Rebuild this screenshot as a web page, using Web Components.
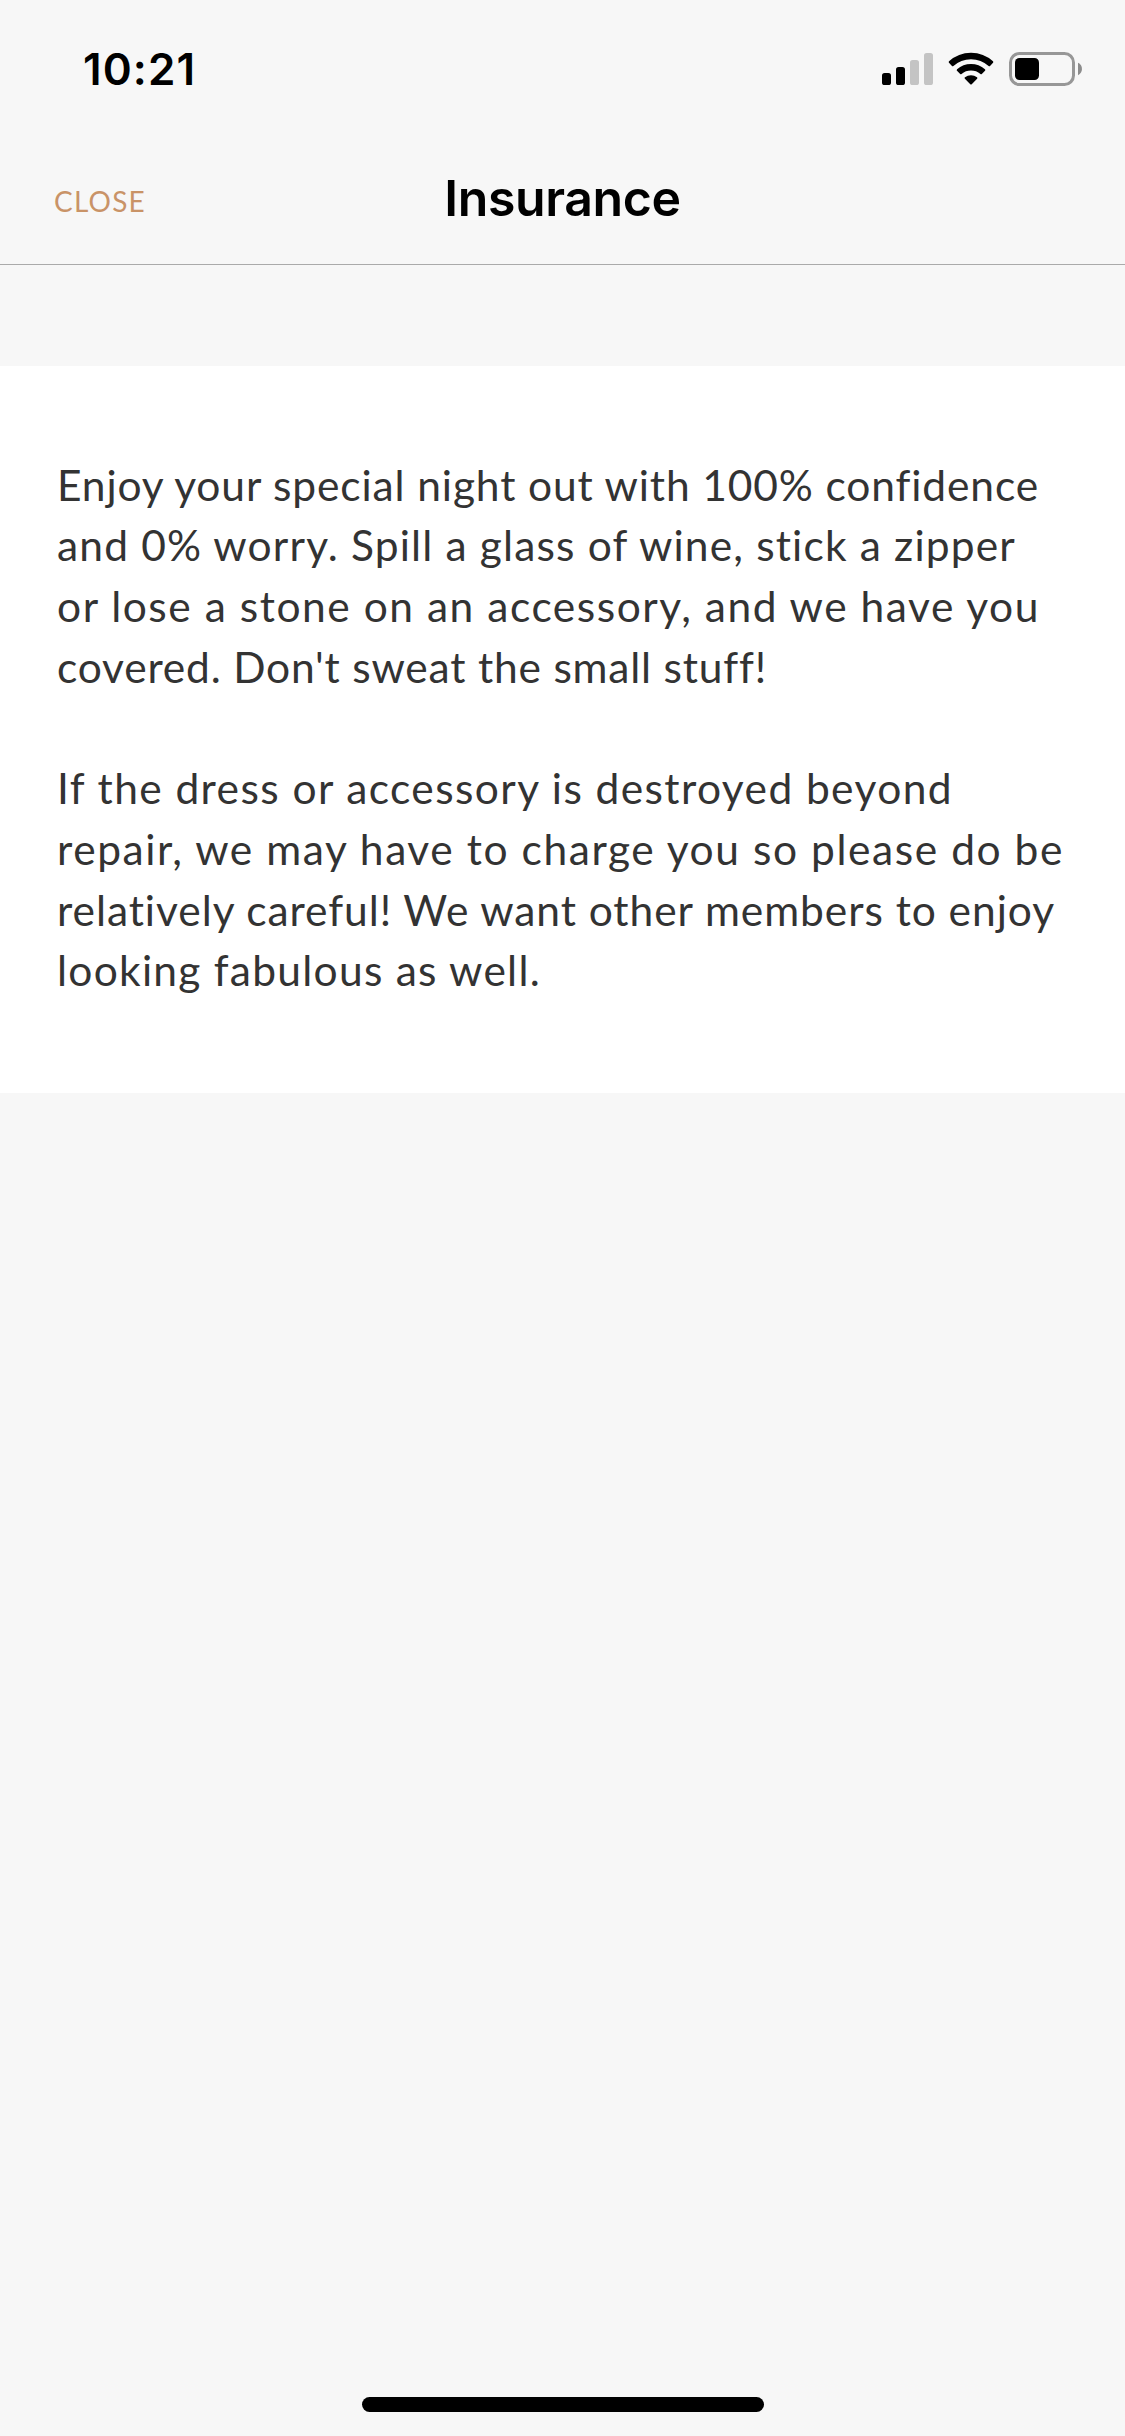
<!DOCTYPE html>
<html lang="en">
<head>
<meta charset="utf-8">
<title>Insurance</title>
<style>
html, body { margin: 0; height: 100%; background: #f7f7f7; }
</style>
</head>
<body>
<app-screen>
  <status-bar slot="top" time="10:21"></status-bar>
  <nav-bar slot="top"><span slot="action">CLOSE</span>Insurance</nav-bar>
  <info-card>
    <text-block>
      <text-line width="982">Enjoy your special night out with 100% confidence</text-line>
      <text-line width="959">and 0% worry. Spill a glass of wine, stick a zipper</text-line>
      <text-line width="983">or lose a stone on an accessory, and we have you</text-line>
      <text-line width="710">covered. Don't sweat the small stuff!</text-line>
    </text-block>
    <text-block>
      <text-line width="896">If the dress or accessory is destroyed beyond</text-line>
      <text-line width="1007">repair, we may have to charge you so please do be</text-line>
      <text-line width="998">relatively careful! We want other members to enjoy</text-line>
      <text-line width="484">looking fabulous as well.</text-line>
    </text-block>
  </info-card>
  <home-indicator slot="bottom"></home-indicator>
</app-screen>
<script>
class Base extends HTMLElement {
  constructor() {
    super();
    this.attachShadow({ mode: 'open' }).innerHTML = this.constructor.markup;
  }
}

class AppScreen extends Base {
  static markup = `<style>
    :host { display: flex; flex-direction: column; width: 1125px; height: 2436px; background: #f7f7f7; overflow: hidden; }
    main { flex: 1; padding-top: 101px; }
  </style><slot name="top"></slot><main><slot></slot></main><slot name="bottom"></slot>`;
}

class StatusBar extends Base {
  static markup = `<style>
    :host { display: flex; justify-content: space-between; height: 132px; padding: 0 41px 0 83px; box-sizing: border-box; color: #000; }
    time { font: 600 44px/54px Inter, sans-serif; letter-spacing: 1.1px; padding-top: 42px; }
    svg { display: block; margin-top: 50px; }
  </style><time></time>
  <svg width="202" height="38" viewBox="882 50 202 38">
    <rect x="882" y="73" width="9" height="12" rx="2.6"/>
    <rect x="896" y="67" width="9" height="18" rx="2.6"/>
    <g fill="#c4c4c4"><rect x="910" y="60" width="9" height="25" rx="2.6"/><rect x="924" y="53" width="9" height="32" rx="2.6"/></g>
    <g stroke="#000" stroke-width="2" stroke-linejoin="round">
      <path d="M949.7 62.1A31.4 31.4 0 0 1 992.3 62.1L989.3 65.3A27 27 0 0 0 952.7 65.3Z"/>
      <path d="M957.7 70.1A20 20 0 0 1 984.3 70.1L981.1 73.3A15.7 15.7 0 0 0 960.9 73.3Z"/>
      <path d="M965.6 78A9 9 0 0 1 976.4 78L971 83.5Z"/>
    </g>
    <rect x="1010.5" y="53.5" width="63" height="31" rx="9" fill="none" stroke="#979797" stroke-width="3"/>
    <rect x="1015" y="58" width="24" height="22" rx="4.5"/>
    <path d="M1078 62.8C1083.3 65 1083.3 73 1078 75.2Z" fill="#8c8c8c"/>
  </svg>`;
  connectedCallback() {
    this.shadowRoot.querySelector('time').textContent = this.getAttribute('time');
  }
}

class NavBar extends Base {
  static markup = `<style>
    :host { display: grid; grid-template-columns: 1fr auto 1fr; height: 133px; box-sizing: border-box; border-bottom: 1px solid #aaa; }
    .action { padding: 51px 0 0 54px; font: 400 28px/36px Lato, sans-serif; letter-spacing: 1.2px; color: #c99367; }
    h1 { margin: 0; padding-top: 36px; font: 600 50px/60px Inter, sans-serif; letter-spacing: -0.4px; color: #000; }
  </style><div class="action"><slot name="action"></slot></div><h1><slot></slot></h1><div></div>`;
}

class InfoCard extends Base {
  static markup = `<style>
    :host { display: flex; flex-direction: column; gap: 60.8px; height: 727px; box-sizing: border-box; padding: 88.5px 0 0 57px; background: #fff; }
  </style><slot></slot>`;
}

class TextBlock extends Base {
  static markup = `<style>
    :host { display: flex; flex-direction: column; font: 400 42.5px/60.7px Lato, sans-serif; color: #333; }
  </style><slot></slot>`;
}

// One line of copy whose tracking is adjusted to fill its width.
class TextLine extends Base {
  static markup = `<style>
    :host { display: block; white-space: nowrap; }
    span { display: inline-block; font-variant-ligatures: none; }
  </style><span><slot></slot></span>`;
  connectedCallback() {
    const span = this.shadowRoot.querySelector('span');
    const gap = +this.getAttribute('width') - span.getBoundingClientRect().width;
    span.style.letterSpacing = gap / this.textContent.length + 'px';
  }
}

class HomeIndicator extends Base {
  static markup = `<style>
    :host { display: flex; justify-content: center; height: 39px; }
    div { width: 402px; height: 15px; border-radius: 8px; background: #000; }
  </style><div></div>`;
}

customElements.define('app-screen', AppScreen);
customElements.define('status-bar', StatusBar);
customElements.define('nav-bar', NavBar);
customElements.define('info-card', InfoCard);
customElements.define('text-block', TextBlock);
customElements.define('text-line', TextLine);
customElements.define('home-indicator', HomeIndicator);
</script>
</body>
</html>
